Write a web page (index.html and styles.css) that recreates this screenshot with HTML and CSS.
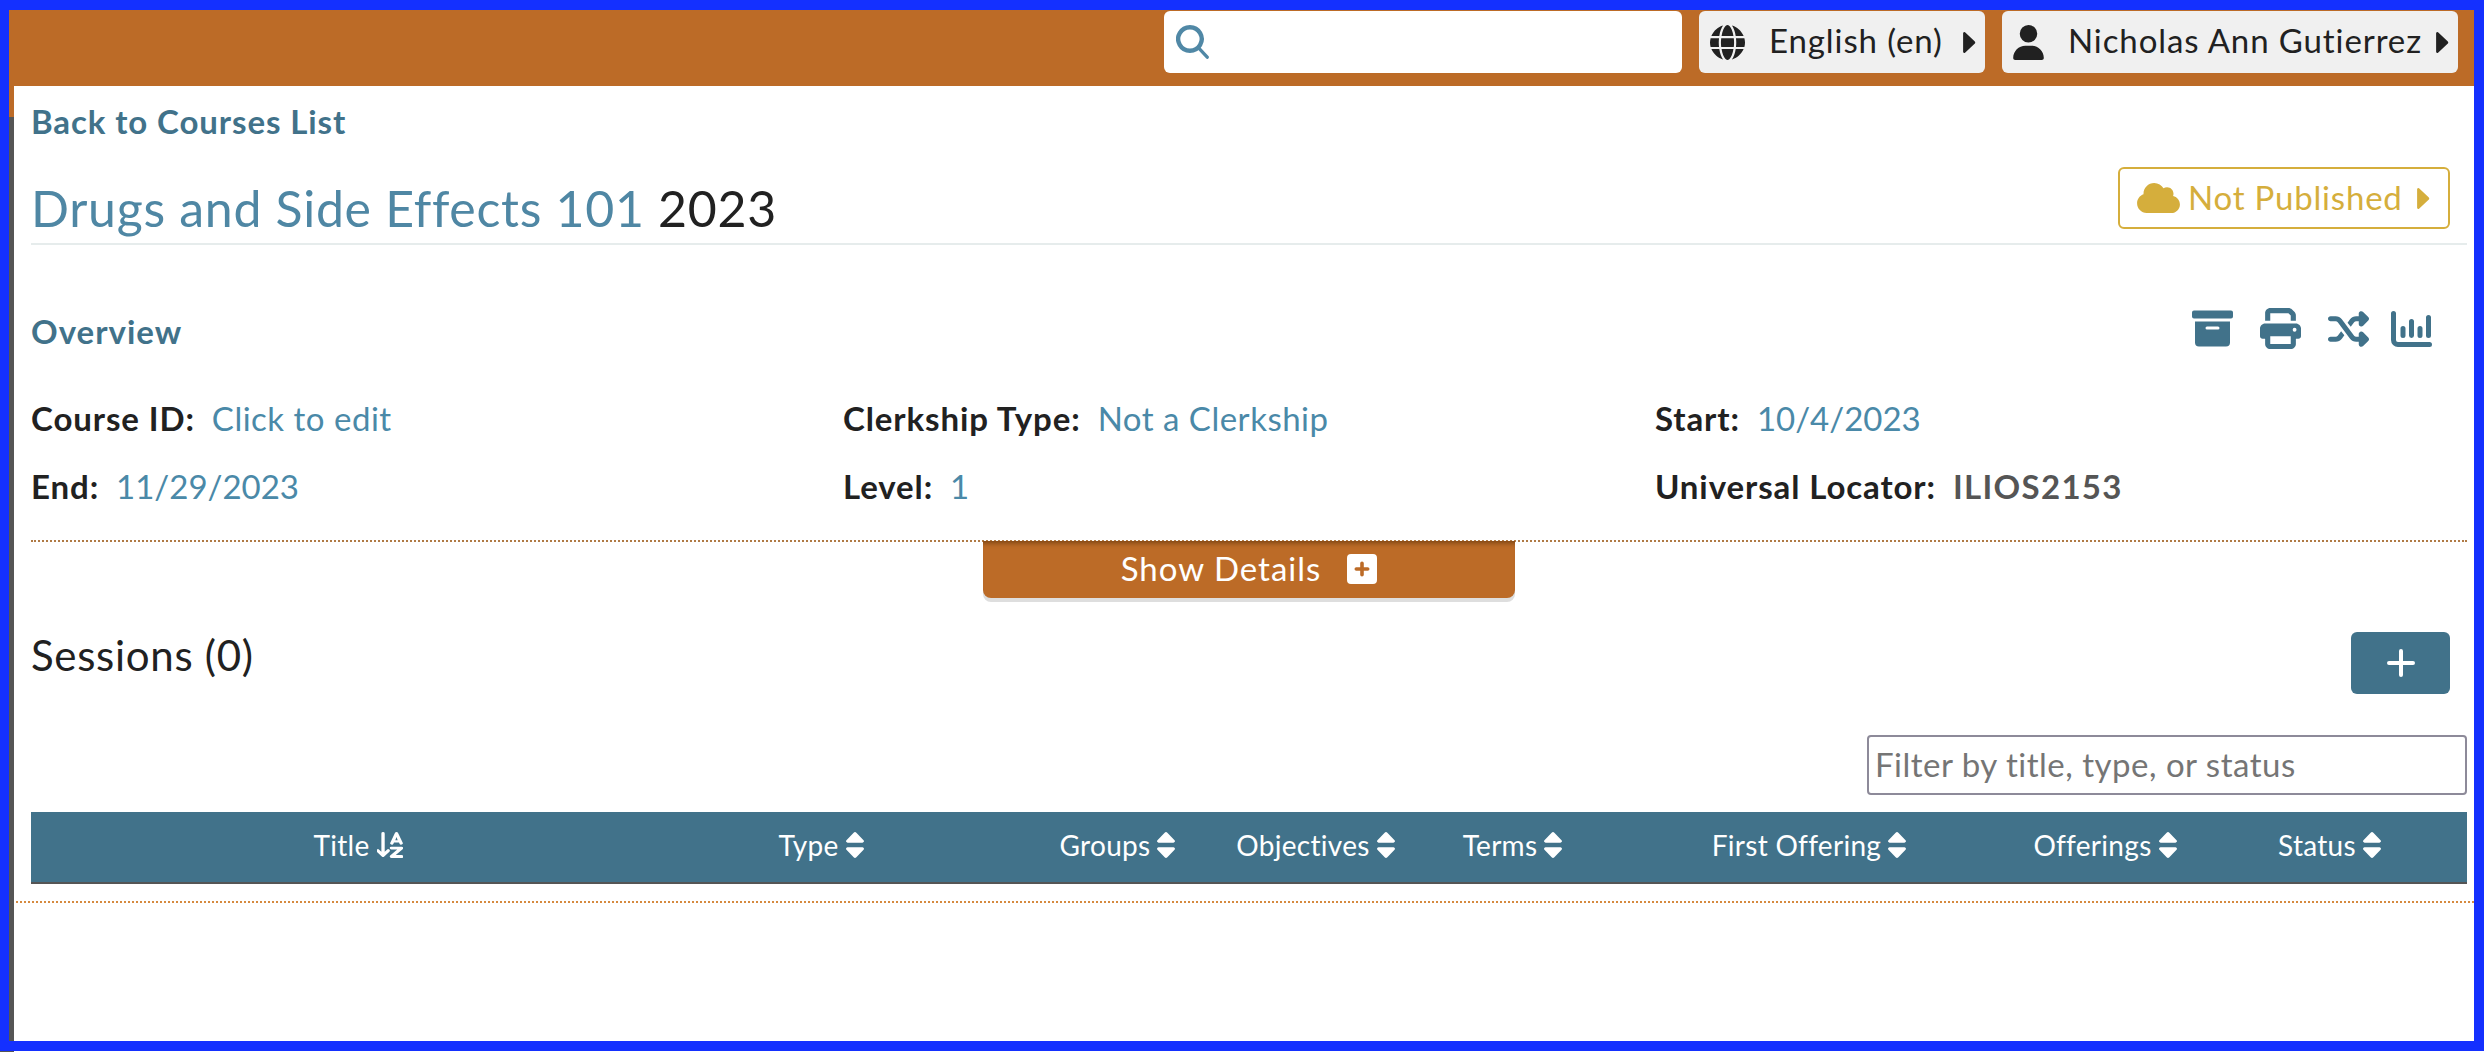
FILE: index.html
```html
<!DOCTYPE html>
<html lang="en">
<head>
<meta charset="utf-8">
<title>Drugs and Side Effects 101</title>
<link rel="stylesheet" href="styles.css">
</head>
<body>
<div class="frame">
  <div class="app">
    <header class="topbar">
      <div class="search">
        <svg class="search-icon" viewBox="0 0 512 512"><path fill="none" stroke="currentColor" stroke-width="66" d="M210 33a177 177 0 1 0 .01 0z"/><path fill="none" stroke="currentColor" stroke-width="50" stroke-linecap="round" d="M340 345l130 140"/></svg>
      </div>
      <div class="menu lang-menu">
        <svg class="globe" viewBox="0 0 512 512"><path d="M352 256c0 22-1 44-4 64H164c-3-20-4-42-4-64s1-44 4-64h184c3 20 4 42 4 64zm28-64h123c5 20 9 42 9 64s-3 44-9 64H380c2-20 4-42 4-64s-2-44-4-64zm112-32H376c-10-64-30-118-55-152 73 19 133 72 171 152zm-149 0H169c6-36 15-68 26-94 10-23 21-40 32-50 11-11 21-16 29-16s18 5 29 16c11 10 22 27 32 50 11 26 20 58 26 94zm-207 0H20C58 80 118 27 191 8c-25 34-45 88-55 152zM9 192h123c-2 20-4 42-4 64s2 44 4 64H9c-5-20-9-42-9-64s4-44 9-64zm186 254c-11-26-20-58-26-94h174c-6 36-15 68-26 94-10 23-21 40-32 50-11 11-21 16-29 16s-18-5-29-16c-11-10-22-27-32-50zm-4 58C118 485 58 432 20 352h116c10 64 30 118 55 152zm130 0c25-34 45-88 55-152h116c-38 80-98 133-171 152z"/></svg>
        <span class="menu-label">English (en)</span>
        <svg class="caret" viewBox="0 0 10 18"><path d="M1.5 1 9 8a1.400 1.400 0 0 1 0 2l-7.500 7A1 1 0 0 1 0 16V2a1 1 0 0 1 1.500-1z"/></svg>
      </div>
      <div class="menu user-menu">
        <svg class="person" viewBox="0 0 448 512"><path d="M224 256a128 128 0 1 0 0-256 128 128 0 1 0 0 256zm-45 48C80 304 0 384 0 483c0 16 13 29 30 29h388c17 0 30-13 30-29 0-99-80-179-179-179h-90z"/></svg>
        <span class="menu-label">Nicholas Ann Gutierrez</span>
        <svg class="caret" viewBox="0 0 10 18"><path d="M1.500 1 9 8a1.400 1.400 0 0 1 0 2l-7.500 7A1 1 0 0 1 0 16V2a1 1 0 0 1 1.500-1z"/></svg>
      </div>
    </header>
    <main class="page">
      <a class="back-link">Back to Courses List</a>
      <div class="title-row">
        <h1 class="course-title"><span class="course-name">Drugs and Side Effects 101</span> <span class="course-year">2023</span></h1>
        <div class="publish">
          <svg class="cloud" viewBox="0 0 640 448"><path d="M0 304c0 79.500 64.500 144 144 144h368c70.700 0 128-57.300 128-128 0-61.900-44-113.600-102.400-125.400 4.100-10.700 6.400-22.400 6.400-34.600 0-53-43-96-96-96-19.700 0-38.100 6-53.300 16.200C367 32.200 315.300 0 256 0 167.600 0 96 71.600 96 160c0 2.700.1 5.400.2 8.100C40.200 187.800 0 241.200 0 304z"/></svg>
          <span class="publish-label">Not Published</span>
          <svg class="caret" viewBox="0 0 10 18"><path d="M1.500 1 9 8a1.400 1.400 0 0 1 0 2l-7.500 7A1 1 0 0 1 0 16V2a1 1 0 0 1 1.500-1z"/></svg>
        </div>
      </div>
      <section class="overview">
        <div class="overview-head">
          <h2 class="overview-title">Overview</h2>
          <div class="actions">
            <svg class="action archive" viewBox="0 0 41 36"><path fill-rule="evenodd" d="M2 0h37a2 2 0 0 1 2 2v4a2 2 0 0 1-2 2H2a2 2 0 0 1-2-2V2a2 2 0 0 1 2-2zm1 11h35v21a4 4 0 0 1-4 4H7a4 4 0 0 1-4-4zm12 5a1.500 1.500 0 0 0 0 3h11a1.500 1.500 0 0 0 0-3z"/></svg>
            <svg class="action printer" viewBox="0 0 512 512"><path d="M128 0C92.700 0 64 28.700 64 64v96h64V64h226.700L384 93.300V160h64V93.300c0-17-6.700-33.300-18.700-45.300L400 18.700C388 6.700 371.700 0 354.700 0H128zm256 352v96H128v-96h256zm64 32h32c17.700 0 32-14.300 32-32v-96c0-35.300-28.700-64-64-64H64c-35.300 0-64 28.700-64 64v96c0 17.700 14.300 32 32 32h32v64c0 35.300 28.700 64 64 64h256c35.300 0 64-28.700 64-64v-64zm-16-136a24 24 0 1 1 0 48 24 24 0 1 1 0-48z"/></svg>
            <svg class="action shuffle" viewBox="0 30 512 452" preserveAspectRatio="none"><path d="M403.800 34.400c12-5 25.700-2.200 34.900 6.900l64 64c6 6 9.400 14.100 9.400 22.600s-3.400 16.600-9.400 22.600l-64 64c-9.200 9.200-22.900 11.900-34.900 6.900S384 204.900 384 192v-32h-32c-10.100 0-19.600 4.700-25.600 12.800L284 229.300l-40-53.300 31.200-41.600C293.300 110.200 321.800 96 352 96h32V64c0-12.900 7.800-24.600 19.800-29.600zM164 282.700l40 53.300-31.200 41.600C154.700 401.800 126.200 416 96 416H32c-17.700 0-32-14.300-32-32s14.300-32 32-32h64c10.100 0 19.600-4.700 25.600-12.800L164 282.700zm274.600 188c-9.200 9.200-22.900 11.900-34.900 6.900S384 460.900 384 448v-32h-32c-30.200 0-58.700-14.200-76.800-38.400L121.600 172.800c-6-8.100-15.500-12.800-25.600-12.800H32c-17.700 0-32-14.300-32-32s14.300-32 32-32h64c30.200 0 58.700 14.200 76.800 38.400l153.600 204.800c6 8.100 15.500 12.800 25.600 12.800h32v-32c0-12.900 7.800-24.600 19.800-29.600s25.700-2.200 34.900 6.900l64 64c6 6 9.400 14.100 9.400 22.600s-3.400 16.600-9.400 22.600l-64 64z"/></svg>
            <svg class="action chart" viewBox="0 0 41 36"><path d="M2.500 0A2.500 2.500 0 0 1 5 2.500V29a2 2 0 0 0 2 2h31.500a2.500 2.500 0 0 1 0 5H7a7 7 0 0 1-7-7V2.500A2.500 2.500 0 0 1 2.500 0zM12 15a2.500 2.500 0 0 1 2.500 2.500v7a2.500 2.500 0 0 1-5 0v-7A2.500 2.500 0 0 1 12 15zm8.500-7A2.500 2.500 0 0 1 23 10.500v14a2.500 2.500 0 0 1-5 0v-14A2.500 2.500 0 0 1 20.500 8zm8.500 7a2.500 2.500 0 0 1 2.500 2.500v7a2.500 2.500 0 0 1-5 0v-7A2.500 2.500 0 0 1 29 15zm8.500-11A2.500 2.500 0 0 1 40 6.500v18a2.500 2.500 0 0 1-5 0v-18A2.500 2.500 0 0 1 37.500 4z"/></svg>
          </div>
        </div>
        <div class="fields">
          <div class="field"><b>Course ID:</b><a>Click to edit</a></div>
          <div class="field"><b>Clerkship Type:</b><a>Not a Clerkship</a></div>
          <div class="field"><b>Start:</b><a class="date">10/4/2023</a></div>
          <div class="field"><b>End:</b><a class="date">11/29/2023</a></div>
          <div class="field"><b>Level:</b><a>1</a></div>
          <div class="field"><b>Universal Locator:</b><strong>ILIOS2153</strong></div>
        </div>
      </section>
      <div class="details-wrap">
        <div class="details-btn">
          <span class="details-label">Show Details</span>
          <svg class="plus-square" viewBox="0 0 30 30"><path fill-rule="evenodd" d="M4 0h22a4 4 0 0 1 4 4v22a4 4 0 0 1-4 4H4a4 4 0 0 1-4-4V4a4 4 0 0 1 4-4zm11 7.500a1.800 1.800 0 0 0-1.800 1.800v3.900H9.300a1.800 1.800 0 0 0 0 3.600h3.900v3.900a1.800 1.800 0 0 0 3.600 0v-3.900h3.900a1.800 1.800 0 0 0 0-3.600h-3.900V9.300A1.800 1.800 0 0 0 15 7.500z"/></svg>
        </div>
      </div>
      <section class="sessions">
        <div class="sessions-head">
          <h2 class="sessions-title">Sessions (0)</h2>
          <div class="add-btn"><svg viewBox="0 0 28 28"><path d="M14 0a2 2 0 0 1 2 2v10h10a2 2 0 0 1 0 4H16v10a2 2 0 0 1-4 0V16H2a2 2 0 0 1 0-4h10V2a2 2 0 0 1 2-2z"/></svg></div>
        </div>
        <div class="filter-row"><input class="filter" type="text" placeholder="Filter by title, type, or status"></div>
        <div class="table-head">
          <div class="th th-title"><span class="th-label">Title</span><svg class="sort-az" viewBox="0 0 28 32" preserveAspectRatio="none"><path d="M6.500 0A1.800 1.800 0 0 1 8.300 1.800v22.400l2.400-2.500a1.800 1.800 0 0 1 2.600 2.500l-5.500 6a1.800 1.800 0 0 1-2.600 0l-5.500-6a1.800 1.800 0 0 1 2.600-2.500l2.400 2.500V1.800A1.800 1.800 0 0 1 6.500 0zM21 0c.8 0 1.400.5 1.700 1.100l5 12a1.800 1.800 0 0 1-3.400 1.300l-.6-1.400h-5.400l-.6 1.400a1.800 1.800 0 0 1-3.400-1.300l5-12C19.600.5 20.200 0 21 0zm0 6.300L19.700 10h2.600zM15.500 18h11a1.800 1.800 0 0 1 1.400 2.900L20.200 28.400h6.300a1.800 1.800 0 0 1 0 3.600h-11a1.800 1.800 0 0 1-1.300-3l7.600-7.400h-6.300a1.800 1.800 0 0 1 0-3.600z"/></svg></div>
          <div class="th"><span class="th-label">Type</span><svg class="sort" viewBox="0 0 20 33" preserveAspectRatio="none"><path d="M8.500 1a2 2 0 0 1 3 0l8 9.500a1.800 1.800 0 0 1-1.500 3H2a1.800 1.800 0 0 1-1.500-3zM2 19.500h16a1.800 1.800 0 0 1 1.500 3l-8 9.500a2 2 0 0 1-3 0l-8-9.500a1.800 1.800 0 0 1 1.500-3z"/></svg></div>
          <div class="th"><span class="th-label">Groups</span><svg class="sort" viewBox="0 0 20 33" preserveAspectRatio="none"><path d="M8.500 1a2 2 0 0 1 3 0l8 9.500a1.800 1.800 0 0 1-1.500 3H2a1.800 1.800 0 0 1-1.500-3zM2 19.500h16a1.800 1.800 0 0 1 1.500 3l-8 9.500a2 2 0 0 1-3 0l-8-9.500a1.800 1.800 0 0 1 1.500-3z"/></svg></div>
          <div class="th"><span class="th-label">Objectives</span><svg class="sort" viewBox="0 0 20 33" preserveAspectRatio="none"><path d="M8.500 1a2 2 0 0 1 3 0l8 9.500a1.800 1.800 0 0 1-1.500 3H2a1.800 1.800 0 0 1-1.500-3zM2 19.500h16a1.800 1.800 0 0 1 1.500 3l-8 9.500a2 2 0 0 1-3 0l-8-9.500a1.800 1.800 0 0 1 1.500-3z"/></svg></div>
          <div class="th"><span class="th-label">Terms</span><svg class="sort" viewBox="0 0 20 33" preserveAspectRatio="none"><path d="M8.500 1a2 2 0 0 1 3 0l8 9.500a1.800 1.800 0 0 1-1.500 3H2a1.800 1.800 0 0 1-1.500-3zM2 19.500h16a1.800 1.800 0 0 1 1.500 3l-8 9.500a2 2 0 0 1-3 0l-8-9.500a1.800 1.800 0 0 1 1.500-3z"/></svg></div>
          <div class="th"><span class="th-label">First Offering</span><svg class="sort" viewBox="0 0 20 33" preserveAspectRatio="none"><path d="M8.500 1a2 2 0 0 1 3 0l8 9.500a1.800 1.800 0 0 1-1.500 3H2a1.800 1.800 0 0 1-1.500-3zM2 19.500h16a1.800 1.800 0 0 1 1.500 3l-8 9.500a2 2 0 0 1-3 0l-8-9.500a1.800 1.800 0 0 1 1.500-3z"/></svg></div>
          <div class="th"><span class="th-label">Offerings</span><svg class="sort" viewBox="0 0 20 33" preserveAspectRatio="none"><path d="M8.500 1a2 2 0 0 1 3 0l8 9.500a1.800 1.800 0 0 1-1.500 3H2a1.800 1.800 0 0 1-1.500-3zM2 19.500h16a1.800 1.800 0 0 1 1.500 3l-8 9.500a2 2 0 0 1-3 0l-8-9.500a1.800 1.800 0 0 1 1.500-3z"/></svg></div>
          <div class="th"><span class="th-label">Status</span><svg class="sort" viewBox="0 0 20 33" preserveAspectRatio="none"><path d="M8.500 1a2 2 0 0 1 3 0l8 9.500a1.800 1.800 0 0 1-1.500 3H2a1.800 1.800 0 0 1-1.500-3zM2 19.500h16a1.800 1.800 0 0 1 1.500 3l-8 9.500a2 2 0 0 1-3 0l-8-9.500a1.800 1.800 0 0 1 1.500-3z"/></svg></div>
        </div>
      </section>
      <div class="end-rule"></div>
    </main>
  </div>
</div>
</body>
</html>
```

FILE: styles.css
```css
* { box-sizing: border-box; }
html, body { margin: 0; padding: 0; height: 1052px; overflow: hidden; background: #fff; }
body {
  font-family: "Lato", "Noto Sans", sans-serif;
  font-size: 33px;
  letter-spacing: .9px;
  color: #212121;
  background: linear-gradient(90deg, #555 14px, #fff 14px);
}
h1, h2 { margin: 0; font-weight: 400; }
svg { display: block; fill: currentColor; flex: none; }

.frame {
  height: 1051px;
  border: solid #1430ff;
  border-width: 10px 10px 10px 9px;
}
.app {
  height: 100%;
  display: flex;
  flex-direction: column;
  background: linear-gradient(#bc6b27 107px, #555 107px);
}

.topbar {
  height: 76px;
  flex: none;
  background: #bc6b27;
  display: flex;
  justify-content: flex-end;
  align-items: flex-start;
  gap: 17px;
  padding: 1px 16px 0 0;
}
.search {
  width: 518px;
  height: 62px;
  background: #fff;
  border-radius: 6px;
  display: flex;
  align-items: center;
  padding-left: 12px;
  color: #5088a6;
}
.search-icon { width: 34px; height: 34px; }
.menu {
  height: 62px;
  background: #f0f0f0;
  border-radius: 6px;
  display: flex;
  align-items: center;
}
.lang-menu { width: 286px; padding-left: 11px; }
.user-menu { width: 456px; padding-left: 11px; }
.globe { width: 35px; height: 35px; margin-right: 24px; }
.person { width: 31px; height: 35px; margin-right: 24px; }
.menu-label { flex: 1; white-space: nowrap; margin-bottom: 4px; }
.caret { width: 13px; height: 23px; margin-right: 9px; }

.page {
  flex: 1;
  margin-left: 5px;
  background: #fff;
  padding: 0 7px 0 17px;
  display: flex;
  flex-direction: column;
}
.back-link {
  display: block;
  margin-top: 12px;
  height: 46px;
  line-height: 46px;
  font-weight: 700;
  color: #41728a;
}
.title-row {
  margin-top: 31px;
  height: 70px;
  display: flex;
  justify-content: space-between;
  align-items: flex-start;
  border-bottom: 2px solid #e6ecec;
}
.course-title { font-size: 50px; line-height: 66px; white-space: nowrap; letter-spacing: .7px; }
.course-name { color: #4f87a4; }
.publish {
  margin: -8px 17px 0 0;
  height: 62px;
  width: 332px;
  border: 2px solid #d5ae3c;
  border-radius: 6px;
  color: #d5ae3c;
  display: flex;
  align-items: center;
  padding: 0 18px 0 17px;
  gap: 8px;
  white-space: nowrap;
  letter-spacing: .8px;
}
.cloud { width: 43px; height: 30px; }
.publish-label { flex: 1; margin-bottom: 3px; }
.publish .caret { margin: 0; }

.overview { border-bottom: 2px dotted #b07a45; height: 297px; }
.overview-head { display: flex; justify-content: space-between; align-items: flex-start; padding-top: 62px; height: 150px; }
.overview-title { font-size: 33px; line-height: 46px; font-weight: 700; color: #41728a; margin-top: 1px; letter-spacing: 1px; }
.actions { display: flex; align-items: flex-start; color: #41728a; gap: 27px; padding-right: 35px; margin-top: 3px; }
.action { height: 37px; width: 41px; }
.printer { height: 41px; margin-top: -2px; }
.shuffle { height: 36px; margin-top: 1px; }
.chart { height: 36px; margin: 1px 0 0 -5px; }
.fields {
  display: grid;
  grid-template-columns: 812px 812px 1fr;
  row-gap: 22px;
}
.field { display: flex; gap: 17px; height: 46px; line-height: 46px; white-space: nowrap; }
.field b { font-weight: 700; }
.field a { color: #4a89a8; letter-spacing: .5px; }
.field .date { letter-spacing: 0; }
.field strong { font-weight: 700; color: #555; letter-spacing: 1.3px; }

.details-wrap { display: flex; justify-content: center; margin-top: -1px; }
.details-btn {
  width: 532px;
  height: 57px;
  background: #bc6b27;
  color: #fff;
  border-radius: 0 0 8px 8px;
  box-shadow: 0 4px 0 #dedede, inset 0 6px 5px -4px rgba(60,30,0,.5);
  display: flex;
  justify-content: center;
  align-items: center;
  gap: 26px;
  letter-spacing: 1px;
}
.details-label { margin-bottom: 4px; }
.plus-square { width: 30px; height: 30px; margin-bottom: 2px; }

.sessions-head { display: flex; justify-content: space-between; align-items: flex-start; height: 137px; padding-top: 29px; }
.sessions-title { font-size: 42px; line-height: 56px; letter-spacing: .7px; }
.add-btn {
  width: 99px;
  height: 62px;
  margin: 5px 17px 0 0;
  background: #41728a;
  border-radius: 6px;
  color: #fff;
  display: flex;
  align-items: center;
  justify-content: center;
}
.add-btn svg { width: 28px; height: 28px; }
.filter-row { display: flex; justify-content: flex-end; height: 60px; }
.filter {
  width: 600px;
  height: 60px;
  border: 2px solid #8d8a99;
  border-radius: 4px;
  padding: 0 6px 3px;
  font: inherit;
  letter-spacing: .5px;
  color: #212121;
  background: #fff;
  outline: none;
}
.filter::placeholder { color: #757575; opacity: 1; }

.table-head {
  margin-top: 17px;
  height: 72px;
  background: #41728a;
  border-bottom: 2px solid #555;
  color: #fff;
  font-size: 28px;
  letter-spacing: .3px;
  display: grid;
  grid-template-columns: 582px 416px 177px 219px 175px 418px 174px 1fr;
  align-items: center;
  justify-items: center;
}
.th { display: flex; align-items: center; gap: 7px; white-space: nowrap; }
.th-title { padding-left: 72px; }
.th-label { margin-bottom: 4px; }
.sort { width: 18px; height: 26px; margin-bottom: 4px; }
.sort-az { width: 26px; height: 26px; margin-bottom: 4px; }

.end-rule { margin: 17px -7px 0 -15px; border-top: 2px dotted #d68a3f; }
```
